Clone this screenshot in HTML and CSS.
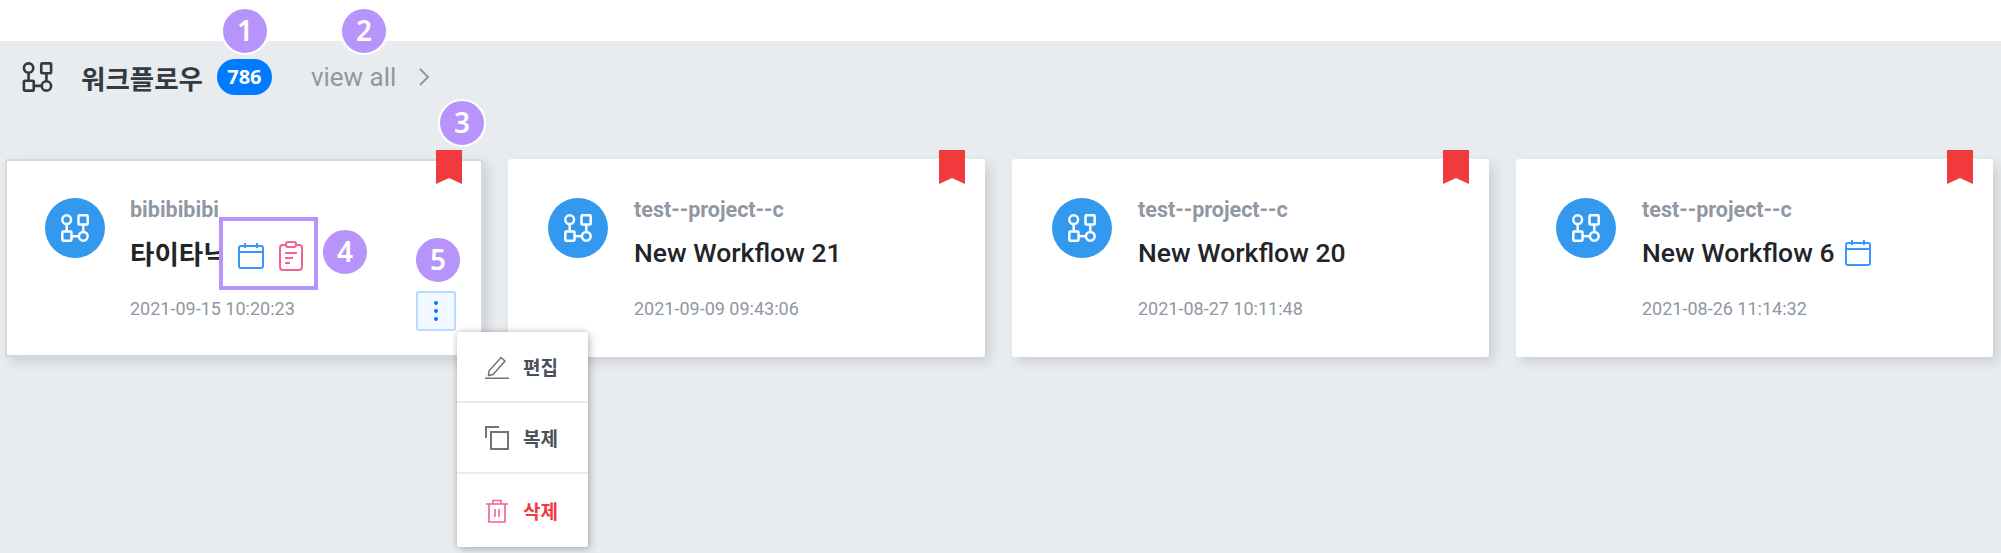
FILE: index.html
```html
<html lang="ko">
  <head>
    <meta charset="UTF-8" />
    <meta name="viewport" content="width=device-width, initial-scale=1.0" />
    <title>Workflow</title>
    <link rel="stylesheet" href="styles.css">
  </head>
  <body>
    <svg class="sprite">
      <symbol id="flow" viewBox="0 0 32 32" fill="none" stroke="currentColor" stroke-width="2.8">
        <circle cx="6.500" cy="6.500" r="5" />
        <rect x="20" y="1.500" width="10.500" height="10.500" rx="1" />
        <rect x="1.500" y="20" width="10.500" height="10.500" rx="1" />
        <circle cx="25.500" cy="25.500" r="5" />
        <path d="M6.500 11.500V20M25.500 12v8.500M12 25.500h8.500" />
      </symbol>
      <symbol id="cal" viewBox="0 0 26 27" fill="none" stroke="currentColor" stroke-width="2">
        <rect x="1" y="4" width="24" height="22" rx="2" />
        <path d="M1 10h24M7 1v5M19 1v5" />
      </symbol>
      <symbol id="clip" viewBox="0 0 24 30" fill="none" stroke="currentColor" stroke-width="2">
        <rect x="1" y="4" width="22" height="25" rx="3" />
        <rect x="7" y="1" width="10" height="5" rx="2" fill="#fff" />
        <path d="M6 12h12M6 17h8M6 22h5" />
      </symbol>
    </svg>

    <main class="page">
      <header class="head">
        <svg class="head-icon"><use href="#flow" /></svg>
        <h1 class="head-title">워크플로우</h1>
        <span class="count">786</span>
        <a class="view-all">view all</a>
        <svg class="chevron" viewBox="0 0 11 18" fill="none" stroke="currentColor" stroke-width="2"><path d="M1 1l8 8-8 8" /></svg>
      </header>

      <section class="cards">
        <article class="card card-active">
          <span class="mark"></span>
          <span class="avatar"><svg><use href="#flow" /></svg></span>
          <div class="info">
            <div class="project">bibibibibi</div>
            <div class="title">타이타닉</div>
            <div class="date">2021-09-15 10:20:23</div>
          </div>
          <div class="highlight">
            <svg class="icon-cal"><use href="#cal" /></svg>
            <svg class="icon-clip"><use href="#clip" /></svg>
          </div>
          <button class="more"><i></i><i></i><i></i></button>
          <ul class="menu">
            <li class="menu-item">
              <svg viewBox="0 0 24 24" fill="none" stroke="currentColor" stroke-width="1.5"><path d="M4 16L16 2.500l4 3.500L8 19.500l-4.500 1z" /><path d="M0 23.500h24" stroke-width="2" /></svg>
              편집
            </li>
            <li class="menu-item">
              <svg viewBox="0 0 24 24" fill="none" stroke="currentColor" stroke-width="2"><rect x="6" y="6" width="17" height="17" /><path d="M1 12V1h13" /></svg>
              복제
            </li>
            <li class="menu-item menu-delete">
              <svg viewBox="0 0 24 24" fill="none" stroke="currentColor" stroke-width="1.6"><path d="M1 5h22M8 5V1.500h8V5M4 5v18h16V5M10 10v8M14 10v8" /></svg>
              삭제
            </li>
          </ul>
        </article>

        <article class="card">
          <span class="mark"></span>
          <span class="avatar"><svg><use href="#flow" /></svg></span>
          <div class="info">
            <div class="project">test--project--c</div>
            <div class="title">New Workflow 21</div>
            <div class="date">2021-09-09 09:43:06</div>
          </div>
        </article>

        <article class="card">
          <span class="mark"></span>
          <span class="avatar"><svg><use href="#flow" /></svg></span>
          <div class="info">
            <div class="project">test--project--c</div>
            <div class="title">New Workflow 20</div>
            <div class="date">2021-08-27 10:11:48</div>
          </div>
        </article>

        <article class="card">
          <span class="mark"></span>
          <span class="avatar"><svg><use href="#flow" /></svg></span>
          <div class="info">
            <div class="project">test--project--c</div>
            <div class="title">New Workflow 6 <svg class="icon-cal"><use href="#cal" /></svg></div>
            <div class="date">2021-08-26 11:14:32</div>
          </div>
        </article>
      </section>
    </main>

    <span class="step step-1">1</span>
    <span class="step step-2">2</span>
    <span class="step step-3">3</span>
    <span class="step step-4">4</span>
    <span class="step step-5">5</span>
  </body>
</html>
```

FILE: styles.css
```css
* {
  box-sizing: border-box;
}

body {
  margin: 0;
  height: 553px;
  overflow: hidden;
  background-color: #ffffff;
  font-family: Roboto, "Noto Sans CJK KR", sans-serif;
}

.sprite {
  display: none;
}

.page {
  margin-top: 41px;
  height: 512px;
  padding: 18px 8px 0 4px;
  background-color: #e9ecef;
}

.head {
  display: flex;
  align-items: center;
  height: 36px;
  padding-left: 18px;
}

.head-icon {
  width: 31px;
  height: 30px;
  color: #343a40;
}

.head-title {
  margin: 0 0 0 28px;
  font-size: 26.5px;
  font-weight: 700;
  color: #343a40;
}

.count {
  margin-left: 14px;
  width: 55px;
  height: 36px;
  line-height: 36px;
  text-align: center;
  border-radius: 18px;
  background-color: #007bff;
  color: #ffffff;
  font-family: "Noto Sans", sans-serif;
  font-size: 20px;
  font-weight: 700;
}

.view-all {
  margin-left: 39px;
  font-size: 26px;
  color: #8f98a3;
}

.chevron {
  margin-left: 23px;
  width: 11px;
  height: 18px;
  color: #8f98a3;
}

.cards {
  display: flex;
  gap: 27px;
  margin-top: 64px;
}

.card {
  position: relative;
  display: flex;
  width: 477px;
  height: 198px;
  padding: 39px 0 0 40px;
  border-radius: 3px;
  background-color: #ffffff;
  box-shadow: 5px 5px 12px rgba(0, 0, 0, 0.12);
}

.card-active {
  width: 478px;
  margin: 0 -2px 0 1px;
  border: 2px solid #d5d9de;
  padding: 37px 0 0 38px;
}

.mark {
  position: absolute;
  top: -9px;
  right: 20px;
  width: 26px;
  height: 34px;
  background-color: #f03a3e;
  clip-path: polygon(0 0, 100% 0, 100% 100%, 50% 82%, 0 100%);
}

.card-active .mark {
  top: -11px;
  right: 19px;
}

.avatar {
  display: flex;
  align-items: center;
  justify-content: center;
  width: 60px;
  height: 60px;
  border-radius: 50%;
  background-color: #3399ee;
  color: #ffffff;
}

.avatar svg {
  width: 28px;
  height: 28px;
}

.info {
  margin-left: 26px;
}

.card-active .info {
  margin-left: 25px;
}

.project {
  height: 24px;
  line-height: 24px;
  font-size: 21.5px;
  font-weight: 700;
  color: #8f98a3;
}

.title {
  display: flex;
  align-items: center;
  gap: 11px;
  height: 32px;
  margin-top: 14px;
  font-size: 26.5px;
  font-weight: 500;
  white-space: nowrap;
  color: #212529;
}

.card-active .title {
  font-weight: 700;
}

.date {
  margin-top: 30px;
  font-size: 18px;
  line-height: 22px;
  color: #8f98a3;
}

.icon-cal {
  width: 26px;
  height: 27px;
  color: #3a96ff;
}

.icon-clip {
  width: 24px;
  height: 30px;
  color: #f5608f;
}

.highlight {
  position: absolute;
  top: 56px;
  left: 212px;
  display: flex;
  align-items: center;
  gap: 15px;
  width: 99px;
  height: 73px;
  padding: 4px 0 0 15px;
  border: 4px solid #b794fb;
  background-color: #ffffff;
}

.more {
  position: absolute;
  top: 130px;
  left: 409px;
  display: flex;
  flex-direction: column;
  align-items: center;
  justify-content: center;
  gap: 4px;
  width: 40px;
  height: 40px;
  padding: 0;
  border: 2px solid #b8dcff;
  border-radius: 3px;
  background-color: #f2f8ff;
}

.more i {
  width: 4px;
  height: 4px;
  border-radius: 50%;
  background-color: #007bff;
}

.menu {
  position: absolute;
  top: 171px;
  left: 450px;
  z-index: 2;
  width: 131px;
  margin: 0;
  padding: 0;
  list-style: none;
  border-radius: 3px;
  background-color: #ffffff;
  box-shadow: 0 0 6px rgba(0, 0, 0, 0.25), 4px 4px 10px rgba(0, 0, 0, 0.1);
}

.menu-item {
  display: flex;
  align-items: center;
  gap: 14px;
  height: 71px;
  padding-left: 28px;
  border-bottom: 2px solid #e9ecef;
  font-size: 19px;
  font-weight: 700;
  color: #495057;
}

.menu-item:last-child {
  height: 73px;
  border-bottom: 0;
}

.menu-item svg {
  width: 24px;
  height: 24px;
  color: #6c757d;
}

.menu-delete {
  color: #f03a3e;
}

.menu-delete svg {
  color: #f5608f;
}

.step {
  position: absolute;
  z-index: 3;
  width: 48px;
  height: 48px;
  line-height: 42px;
  text-align: center;
  border: 2px solid #ffffff;
  border-radius: 50%;
  background-color: #b794fb;
  color: #ffffff;
  font-family: "Noto Sans", sans-serif;
  font-size: 28px;
  font-weight: 600;
}

.step-1 {
  top: 7px;
  left: 221px;
}

.step-2 {
  top: 7px;
  left: 340px;
}

.step-3 {
  top: 99px;
  left: 438px;
}

.step-4 {
  top: 228px;
  left: 321px;
}

.step-5 {
  top: 236px;
  left: 414px;
}
```
